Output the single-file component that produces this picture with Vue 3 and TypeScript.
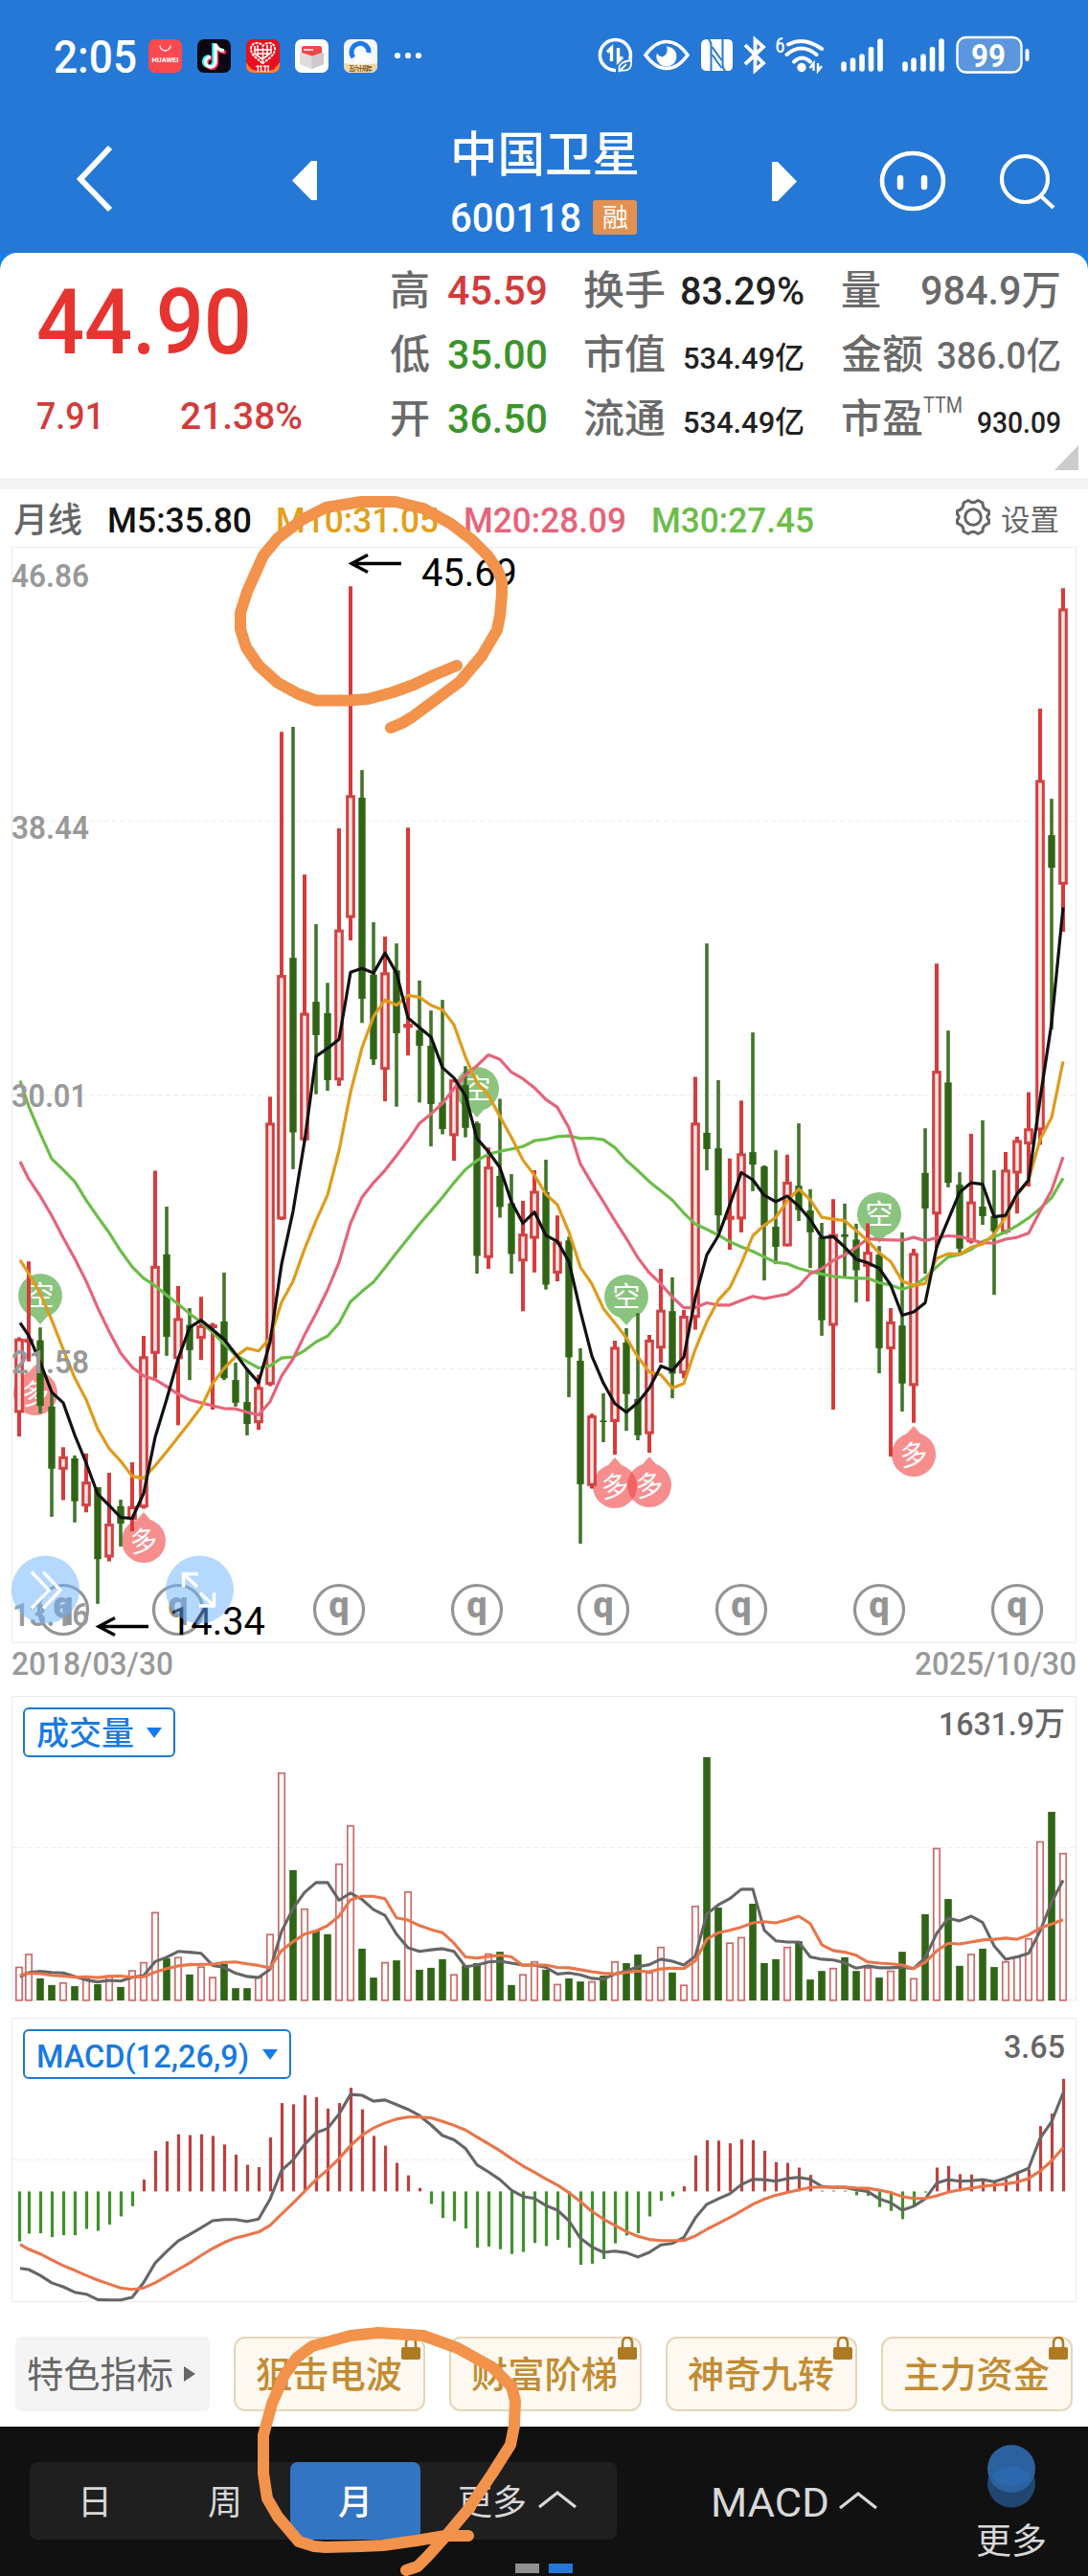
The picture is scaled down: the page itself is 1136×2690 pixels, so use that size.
<script setup lang="ts">
import { h } from 'vue'

interface FitProps { t: string; w: number; s: number; b?: number }

// A single line of text condensed or widened to an exact width; the box bottom is the baseline.
const Fit = (p: FitProps) => {
  const height = Math.round(p.s * 0.72)
  return h('svg', { width: p.w, height, style: 'display:block;overflow:visible;flex:none' }, [
    h('text', {
      x: 0, y: height, textLength: p.w, lengthAdjust: 'spacingAndGlyphs',
      'font-size': p.s, 'font-weight': p.b ?? 400, fill: 'currentColor',
    }, p.t),
  ])
}
Fit.props = ['t', 'w', 's', 'b']

const nums = (s: string) => s.trim().split(/\s+/).map(Number)
const cx = (i: number) => (i === 0 ? 20 : 18 + 12 * i)

// kind, high, body top, body bottom, low
const candles = `R 598 603 796 860;R 398 604 610 662;G 572 606 779 799;G 745 781 945 1072;R 888 914 946 1028;G 910 918 1031 1087;R 905 981 1043 1060;G 994 994 1184 1302;R 956 1092 1178 1190;G 1027 1044 1090 1151;R 928 1046 1078 1110;R 594 650 1046 1051;R 158 411 640 706;G 253 379 597 647;R 463 549 654 830;G 521 565 632 711;R 491 568 600 658;R 560 566 572 789;G 427 556 706 711;G 665 711 771 781;G 682 769 827 857;R 697 731 823 842;R -37 33 722 727;R -1001 -357 285 288;G -1014 -404 57 154;R -624 -257 76 80;G -493 -288 -200 -44;G -338 -258 -81 -53;R -746 -477 -82 -66;R -1385 -832 -511 -450;G -900 -827 -296 -232;G -498 -360 -136 -121;R -460 -364 -110 -25;G -442 -371 -205 -11;R -748 -228 -221 -146;G -344 -213 -172 -22;G -265 -172 -18 94;G -293 -22 48 62;R -81 -81 65 132;G -118 -68 45 70;G 28 33 383 430;R 97 149 387 417;G -32 172 254 282;G 167 244 378 430;R 238 326 396 529;R 157 213 336 427;G 129 215 459 472;R 276 347 428 450;G 332 342 651 756;G 627 660 986 1143;R 800 806 989 998;G 746 818 822 875;R 607 625 820 908;G 574 612 748 845;G 534 761 857 870;R 592 606 852 903;R 417 527 626 665;G 440 529 694 759;R 526 543 692 706;R -90 33 545 578;G -442 58 101 157;G -81 99 276 320;R 126 279 286 367;R -27 114 285 321;G -207 109 142 212;G 144 147 303 448;G 104 306 359 405;R 116 189 356 358;G 33 198 262 291;G 207 263 321 415;G 296 333 553 594;R 233 327 566 789;G 245 326 333 438;G 298 340 421 506;R 297 374 410 503;G 357 380 627 693;R 521 558 628 913;G 321 567 720 794;R 364 377 725 824;G 46 164 258 430;R -389 -104 272 362;G -212 -75 190 202;G 162 195 364 375;R 61 241 345 350;G 25 253 278 301;G 157 278 318 486;R 109 157 320 325;R 68 79 164 271;R -49 48 87 200;R -1062 -872 50 90;G -824 -728 -642 -215;R -1380 -1325 -599 -473`
  .split(';').map((row, i) => {
    const [kind, ...v] = row.trim().split(' ')
    const [hi, top, bot, lo] = v.map(n => 1160 + Number(n) / 2.529)
    return { x: cx(i), up: kind === 'R', hi, top, bot, lo }
  })

const line = (s: string, base: number, k: number) =>
  nums(s).map((v, i) => `${i === 0 ? 21 : cx(i)},${(base + v / k).toFixed(1)}`).join(' ')

const averages = [
  { c: '#6cbd4a', s: '-80 -12 60 127 156 187 236 280 322 370 412 442 462 487 510 536 558 585 615 645 662 679 673 653 650 633 610 595 561 504 477 452 414 375 337 299 264 228 190 155 131 114 107 101 94 79 75 68 66 73 72 76 97 131 158 187 211 236 270 299 313 328 346 359 371 386 400 404 416 424 431 437 440 442 442 454 460 471 462 441 412 386 380 366 345 333 320 303 283 258 230 178' },
  { c: '#e5647a', s: '134 180 225 277 335 390 450 520 583 640 677 700 710 728 748 763 771 779 786 787 796 803 768 700 655 592 535 473 400 297 228 190 157 118 78 33 8 -20 -59 -95 -119 -148 -136 -102 -85 -61 -30 -9 45 140 192 240 290 337 388 428 457 492 520 520 507 513 513 501 490 496 490 484 463 430 417 395 380 361 338 340 341 342 334 343 335 330 332 340 349 349 339 334 323 265 210 122' },
  { c: '#de9c1c', s: '394 430 482 552 630 705 763 840 892 925 965 970 937 900 862 823 783 720 680 649 627 634 600 505 450 365 290 222 105 -49 -167 -249 -293 -279 -305 -300 -279 -267 -227 -142 -74 -42 15 70 130 170 220 248 320 413 457 522 560 600 650 690 697 732 720 630 557 500 467 403 330 302 282 238 206 235 281 286 290 316 343 375 398 450 461 456 390 377 379 360 352 326 280 222 183 75 18 -131' },
  { c: '#111', s: '560 594 664 743 771 856 930 1012 1042 1074 1076 1010 862 762 655 572 553 578 604 642 683 718 610 405 265 80 -144 -165 -189 -366 -376 -364 -417 -364 -245 -220 -195 -114 -87 -40 73 108 150 240 297 267 329 345 398 529 648 719 773 796 770 732 674 686 650 493 380 330 248 163 182 223 240 225 252 287 335 332 360 392 401 416 460 540 531 507 360 288 215 190 194 280 276 219 183 -32 -232 -537' },
].map(a => ({ c: a.c, p: line(a.s, 1160, 2.529) }))

const volumes = nums('695 662 725 742 735 745 724 740 717 747 704 683 555 674 670 715 694 721 688 750 750 720 611 198 448 546 602 612 431 333 649 723 683 679 502 703 698 676 714 692 686 661 657 742 714 681 703 739 725 733 732 718 681 686 664 709 644 710 741 539 159 544 633 619 534 686 676 644 630 728 706 698 671 706 697 723 705 657 724 561 391 522 693 662 649 696 681 668 622 374 299 404')
  .map((v, i) => ({ x: candles[i].x, up: candles[i].up, y: 1770 + v / 2.45 }))
const volumeLines = [
  { c: '#666', s: '721 710 707 710 711 720 729 734 730 732 722 718 682 671 656 658 661 692 697 712 720 723 702 605 546 505 480 480 525 507 523 549 564 612 647 656 652 649 656 695 691 683 681 686 691 691 697 714 711 716 725 727 714 706 695 690 676 681 691 668 560 537 521 497 497 602 629 632 632 670 676 678 685 699 693 698 698 696 700 672 610 571 578 566 582 642 676 670 661 604 530 474' },
  { c: '#e9754a', s: '717 712 713 717 719 722 721 723 720 719 722 721 709 700 693 690 689 689 684 683 688 692 698 654 631 612 604 590 566 524 515 515 521 570 576 590 600 608 635 670 673 669 666 670 692 691 691 697 698 703 708 712 714 710 706 708 701 699 700 680 625 608 602 594 583 580 583 575 566 585 639 654 658 666 683 686 688 691 700 684 655 635 637 632 627 625 622 625 614 596 586 575' },
].map(a => ({ c: a.c, p: line(a.s, 1770, 2.45) }))

const macdBars = nums('1398 1378 1377 1387 1382 1382 1366 1371 1355 1334 1308 1240 1166 1142 1124 1126 1124 1128 1150 1176 1202 1208 1132 1044 1047 1024 1029 1058 1044 1005 1060 1128 1153 1197 1229 1261 1302 1338 1346 1365 1414 1411 1418 1430 1425 1402 1410 1394 1414 1458 1455 1443 1403 1383 1377 1334 1294 1283 1257 1178 1139 1140 1147 1137 1139 1166 1195 1197 1209 1228 1268 1268 1268 1280 1281 1310 1320 1341 1306 1273 1209 1205 1226 1227 1240 1245 1240 1226 1214 1103 1071 982')
  .map((v, i) => ({ x: cx(i) + 0.5, y: 1770 + v / 2.45, up: v < 1270 }))
const macdLines = [
  { c: '#666', s: '1467 1470 1485 1504 1514 1528 1533 1547 1548 1548 1541 1503 1453 1424 1397 1380 1363 1345 1342 1342 1347 1341 1290 1216 1190 1150 1120 1109 1072 1022 1024 1039 1036 1048 1060 1076 1100 1127 1138 1160 1202 1220 1240 1267 1283 1288 1306 1318 1345 1390 1412 1426 1423 1427 1438 1426 1407 1403 1388 1338 1303 1289 1276 1253 1239 1240 1244 1237 1234 1239 1257 1260 1260 1266 1270 1289 1299 1318 1308 1289 1249 1240 1244 1243 1240 1245 1236 1223 1211 1134 1092 1018' },
  { c: '#e9754a', s: '1406 1418 1430 1445 1460 1472 1485 1497 1507 1517 1521 1517 1504 1487 1470 1453 1434 1416 1401 1389 1382 1374 1357 1328 1300 1270 1240 1215 1186 1153 1126 1108 1095 1085 1080 1080 1082 1091 1101 1113 1131 1148 1166 1186 1205 1221 1238 1254 1273 1296 1321 1341 1357 1373 1385 1393 1396 1396 1396 1384 1367 1352 1337 1320 1303 1290 1280 1273 1266 1260 1259 1259 1259 1261 1262 1267 1273 1283 1288 1288 1281 1272 1266 1262 1257 1254 1251 1246 1237 1218 1192 1158' },
].map(a => ({ c: a.c, p: line(a.s, 1770, 2.45) }))

const sells = [[42, 1353], [498, 1137], [654, 1354], [918, 1268]]
const buys = [[37, 1455], [150, 1609], [642, 1552], [678, 1551], [954, 1519]]
const quarters = [66, 186, 354, 498, 630, 774, 918, 1062]
const axis = [
  { t: '46.86', x: 12, y: 613, w: 81 }, { t: '38.44', x: 12, y: 875.5, w: 81 },
  { t: '30.01', x: 12, y: 1155.5, w: 79 }, { t: '21.58', x: 12, y: 1434, w: 81 },
  { t: '13.16', x: 13, y: 1698, w: 80 },
]
const stats = [
  [
    { l: '高', lw: 42, v: '45.59', w: 105, s: 43, c: 'red' },
    { l: '低', lw: 42, v: '35.00', w: 105, s: 43, c: 'green' },
    { l: '开', lw: 42, v: '36.50', w: 105, s: 43, c: 'green' },
  ],
  [
    { l: '换手', lw: 86, v: '83.29%', w: 130, s: 41, c: 'dark' },
    { l: '市值', lw: 86, v: '534.49亿', w: 127, s: 32, c: 'dark' },
    { l: '流通', lw: 86, v: '534.49亿', w: 127, s: 32, c: 'dark' },
  ],
  [
    { l: '量', lw: 42, v: '984.9万', w: 147, s: 42, c: 'grey' },
    { l: '金额', lw: 86, v: '386.0亿', w: 130, s: 39, c: 'grey' },
    { l: '市盈', lw: 86, v: '930.09', w: 88, s: 31, c: 'dark', sup: 'TTM' },
  ],
]
const chips = ['狙击电波', '财富阶梯', '神奇九转', '主力资金']
</script>

<template>
  <div class="app">
    <header>
      <div class="status">
        <Fit class="time" t="2:05" :w="87" :s="48" :b="500" />
        <div class="apps">
          <svg width="35" height="35"><rect width="35" height="35" rx="7" fill="#fb4950" /><path d="M12 6.5a5.5 5.5 0 0 0 11 0" fill="none" stroke="#fff" stroke-width="1.3" /><text x="3.5" y="24" font-size="6.500" font-weight="700" fill="#fff" textLength="28" lengthAdjust="spacingAndGlyphs">HUAWEI</text></svg>
          <svg width="35" height="35"><rect width="35" height="35" rx="7" fill="#0b0814" /><g fill="none" stroke-width="4"><path d="M18 4v19a5.2 5.2 0 1 1-5-5M18 5q2 6 10 7" stroke="#25f4ee" transform="translate(-.8 0)" /><path d="M19.5 5v19a5.2 5.2 0 1 1-5-5M19.500 6q2 6 9.500 7" stroke="#fe2c55" transform="translate(.7 .8)" /><path d="M19 4.500v19a5.200 5.200 0 1 1-5-5M19 5.500q2 6 9 6.500" stroke="#fff" stroke-width="3.500" /></g></svg>
          <svg width="35" height="35"><clipPath id="a3"><rect width="35" height="35" rx="7" /></clipPath><g clip-path="url(#a3)"><rect width="35" height="35" fill="#e8101c" /><path d="M0 24q4 9 17 9t18-9v11H0z" fill="#f98038" /><path d="M5 26h25v5q-12 5-25 0z" fill="#e8101c" /><path d="M17.500 25C9 19 5 15 5 10c0-7 9-8 12.500-3C21 2 30 3 30 10c0 5-4 9-12.500 15z" fill="none" stroke="#fff" stroke-width="2" stroke-dasharray="3 1" /><path d="M9 7v8l8 6 9-7V6M12 6v12M17.500 9v15M22 6v12M8 11h19M12 15h12" fill="none" stroke="#fff" stroke-width="1.600" /><text x="9.500" y="33.500" font-size="9" font-weight="700" fill="#fff" textLength="16">11.11</text></g></svg>
          <svg width="35" height="35"><rect width="35" height="35" rx="7" fill="#fefdfd" /><path d="M5 14h25v12l-12.500 5L5 26z" fill="#e0dcdc" /><path d="M17.500 18 30 14v12l-12.500 5z" fill="#cfcaca" /><path d="M7 9q0-2 3-2h16q2 0 2 2v5l-10 3.500L7 14z" fill="#ee4747" /><path d="M9 11h10" stroke="#fff" stroke-width="1.500" /></svg>
          <svg width="35" height="35"><clipPath id="a5"><rect width="35" height="35" rx="7" /></clipPath><g clip-path="url(#a5)"><rect width="35" height="35" fill="#f6f7fd" /><path d="M0 25q17 3 35 0v10H0z" fill="#ecd7ab" /><path d="M10 19a9 9 0 1 1 16-5" fill="none" stroke="#1b7aea" stroke-width="5" /><path d="M12 23q-1-6 4-6 2-6 7-3 5 1 3 6 3 1 1 3z" fill="#fff" /><text x="5" y="32.500" font-size="6.500" font-weight="700" fill="#8a5b25" textLength="25" font-family="Noto Sans CJK SC">五六十周年</text></g></svg>
        </div>
        <svg class="dots" width="30" height="8" fill="#fff"><circle cx="4" cy="4" r="3.100" /><circle cx="15" cy="4" r="3.100" /><circle cx="26" cy="4" r="3.100" /></svg>
        <svg class="sys" width="456" height="42" viewBox="620 36 456 42" fill="none" stroke="#fff">
          <path d="M643 73.500A16 16 0 1 1 657.800 62" stroke-width="3.600" />
          <path d="M638.500 64V50l-4.500 4.500M645.500 50v14l4.500-4.500" stroke-width="3.400" />
          <path d="M646.500 73.500q-1.500-9 12.500-10.500 1 12-9.500 10.500zM646 75l8-8" stroke-width="1.800" />
          <path d="M674 57.500Q684 43.500 696 43.500T718 57.500Q708 71.500 696 71.500T674 57.500z" stroke-width="3.600" />
          <path d="M696 48.500a10.500 10.500 0 1 1-10 7q4 6 8 2.500t2-9.500z" fill="#fff" stroke="none" />
          <path fill="#fff" stroke="none" d="M738 41h22q5 0 5 6v21q0 6-5 6h-22q-6 0-6-6V47q0-6 6-6z" />
          <path d="M739.500 41q3 2 3 7v26M757.500 74q-3-2-3-7V41" stroke="#2578d5" stroke-width="2" />
          <path d="M743.500 49l10 14M743.500 57l10 14" stroke="#2578d5" stroke-width="2" />
          <path d="m778 47 19 19-8.500 7.500V41.500L797 49l-19 18" stroke-width="3.800" />
          <text x="809.500" y="55" font-size="22" font-weight="500" fill="#fff" stroke="none" textLength="10" lengthAdjust="spacingAndGlyphs">6</text>
          <path d="M823 46.500q16-9 35 4.500M821.500 57q15-13 31 0M829 64.500q8.500-8 17 0" stroke-width="4" stroke-linecap="round" />
          <circle cx="837" cy="70.500" r="4.700" fill="#fff" stroke="none" />
          <path d="M849.500 74V66l-4 5M854 66v8l4-5" stroke-width="2.400" />
          <g stroke-width="5.600" stroke-linecap="round">
            <path d="M881 67v5M890.500 63v9M900 59v13M909.500 51.500v20.500M919 43v29" />
            <path d="M945 67v5M954 63v9M964 59v13M973.500 51.500v20.500M983 43v29" />
          </g>
          <rect x="999.500" y="39" width="67" height="36.500" rx="9" fill="#5b96de" stroke-width="2.400" />
          <path d="M1072.500 53v9" stroke-width="4" stroke-linecap="round" />
          <text x="1014" y="69.500" font-size="34" font-weight="700" fill="#fff" stroke="none" textLength="36" lengthAdjust="spacingAndGlyphs">99</text>
        </svg>
      </div>
      <nav>
        <svg class="back" width="42" height="72"><path d="M36 4 5 37l31 32" fill="none" stroke="#fff" stroke-width="6" /></svg>
        <svg class="prev" width="26" height="42"><path d="M26 0v41h-6L0 20.500 20 0z" fill="#fff" /></svg>
        <div class="title">
          <Fit t="中国卫星" :w="198" :s="50" :b="500" />
          <div class="code"><Fit t="600118" :w="137" :s="43" :b="500" /><span class="badge"><Fit t="融" :w="27" :s="27" /></span></div>
        </div>
        <svg class="next" width="26" height="42"><path d="M0 0v41h6l20-20.500L6 0z" fill="#fff" /></svg>
        <svg class="face" width="70" height="66" fill="none" stroke="#fff"><ellipse cx="35" cy="33" rx="32" ry="29" stroke-width="4.600" /><path d="M22 30v9M47 30v9" stroke-width="6.500" stroke-linecap="round" /></svg>
        <svg class="find" width="60" height="62" fill="none" stroke="#fff" stroke-width="4.200"><circle cx="27" cy="28" r="24" /><path d="m44 46 13 12" /></svg>
      </nav>
    </header>

    <div class="cardback"><section class="quote">
      <div class="price">
        <Fit t="44.90" :w="225" :s="94" :b="500" />
        <div class="chg"><Fit t="7.91" :w="71" :s="39" :b="500" /><Fit class="pct" t="21.38%" :w="128" :s="39" :b="500" /></div>
      </div>
      <div v-for="(col, i) in stats" :key="i" class="col" :class="'col' + i">
        <div v-for="r in col" :key="r.l" class="stat">
          <span class="grey lab"><Fit :t="r.l" :w="r.lw" :s="42" :b="500" /><span v-if="'sup' in r" class="sup"><Fit t="TTM" :w="41" :s="23" :b="400" /></span></span>
          <span :class="r.c"><Fit :t="r.v" :w="r.w" :s="r.s" :b="500" /></span>
        </div>
      </div>
      <svg class="corner" width="25" height="26"><path d="M25 0v26H0z" fill="#ccc" /></svg>
    </section></div>

    <section class="legend">
      <Fit class="kind" t="月线" :w="72" :s="36" :b="500" />
      <Fit class="m5" t="M5:35.80" :w="151" :s="37" :b="500" />
      <Fit class="m10" t="M10:31.05" :w="170" :s="37" :b="500" />
      <Fit class="m20" t="M20:28.09" :w="170" :s="37" :b="500" />
      <Fit class="m30" t="M30:27.45" :w="170" :s="37" :b="500" />
      <svg class="gear" width="38" height="40" viewBox="-19 -20 38 40" fill="none" stroke="#666" stroke-width="3"><path d="M-5-17.500Q0-13 5-17.500L10-15Q9.500-8.500 16.500-6.500V-3Q13 0 16.500 3V6.500Q9.500 8.500 10 15L5 17.500Q0 13-5 17.500L-10 15Q-9.500 8.500-16.500 6.500V3Q-13 0-16.500-3V-6.500Q-9.500-8.500-10-15z" stroke-linejoin="round" /><circle r="8.300" /></svg>
      <Fit class="set" t="设置" :w="61" :s="31" />
    </section>

    <svg class="pane" width="1136" height="1200" viewBox="0 570 1136 1200">
      <rect x="12.500" y="571.500" width="1111" height="1144" fill="none" stroke="#ececec" />
      <path d="M13 857.500H1123M13 1143.500H1123M13 1429.500H1123" stroke="#ececec" stroke-dasharray="5 3" />
      <g font-family="Noto Sans CJK SC" font-size="29" text-anchor="middle" fill="#fff">
        <g v-for="m in sells" :key="m[0]" :transform="`translate(${m[0]} ${m[1]})`">
          <path d="M0 30-7 22A23 23 0 1 1 7 22z" fill="#8bc47f" /><text y="10.500">空</text>
        </g>
        <g v-for="m in buys" :key="m[0]" :transform="`translate(${m[0]} ${m[1]})`">
          <path d="M0-30 7-22A23 23 0 1 1-7-22z" fill="#f04848" fill-opacity=".62" /><text y="10.500" transform="rotate(-8)">多</text>
        </g>
      </g>
      <g v-for="x in quarters" :key="x">
        <circle :cx="x" cy="1681" r="25.500" fill="none" stroke="#949494" stroke-width="3.200" />
        <text :x="x" y="1688.500" font-size="38" font-weight="800" text-anchor="middle" fill="#949494">q</text>
      </g>
      <template v-for="c in candles" :key="c.x">
        <g v-if="c.up" stroke="#d93a3a" fill="none">
          <path :d="`M${c.x} ${c.hi}V${c.top}M${c.x} ${c.bot}V${c.lo}`" stroke-width="4" />
          <rect :x="c.x - 3.300" :y="c.top + 0.800" width="6.600" :height="Math.max(c.bot - c.top - 1.600, 0.500)" stroke-width="3.100" stroke="#d04343" fill="#fbe6e6" />
        </g>
        <g v-else fill="#316516">
          <rect :x="c.x - 1.800" :y="c.hi" width="3.600" :height="c.lo - c.hi" fill="#42752a" />
          <rect :x="c.x - 3.700" :y="c.top" width="7.400" :height="c.bot - c.top" />
        </g>
      </template>
      <polyline v-for="a in averages" :key="a.c" :points="a.p" fill="none" :stroke="a.c" stroke-width="3.200" stroke-linejoin="round" />
      <text v-for="a in axis" :key="a.t" :x="a.x" :y="a.y" :textLength="a.w" lengthAdjust="spacingAndGlyphs" font-size="34" font-weight="600" fill="#999">{{ a.t }}</text>
      <g fill="none" stroke="#000" stroke-width="3.300"><path d="M419 588.500H367M384 579.500l-17 9 17 9M155 1698.500H103M120 1689.500l-17 9 17 9" /></g>
      <text x="440" y="612" font-size="41" textLength="100" lengthAdjust="spacingAndGlyphs">45.69</text>
      <text x="177" y="1707" font-size="41" textLength="100" lengthAdjust="spacingAndGlyphs">14.34</text>
      <g fill="#6cb2ff" fill-opacity=".5"><circle cx="47.500" cy="1660" r="35.500" /><circle cx="208.500" cy="1660" r="35.500" /></g>
      <g fill="none" stroke="#fff" stroke-width="3.400"><path d="m33 1641.500 18 19-18 19M45 1641.500l18 19-18 19" /><path d="M207 1643.500h-15.500v14M192 1644l14 13M208 1677h15.500v-14M223 1676.500l-14-13" /></g>
      <g font-size="32.500" font-weight="500" fill="#999"><text x="12" y="1749" textLength="169" lengthAdjust="spacingAndGlyphs">2018/03/30</text><text x="955" y="1749" textLength="169" lengthAdjust="spacingAndGlyphs">2025/10/30</text></g>
    </svg>

    <section class="sub">
      <svg class="pane" width="1136" height="330" viewBox="0 1770 1136 330">
        <rect x="12.500" y="1771.500" width="1111" height="317" fill="none" stroke="#ececec" />
        <path d="M13 1929.500H1123" stroke="#ececec" stroke-dasharray="5 3" />
        <template v-for="v in volumes" :key="v.x">
          <rect v-if="v.up" :x="v.x - 3.200" :y="v.y + 0.800" width="6.400" :height="2088 - v.y" fill="#fff" stroke="#cc6a6a" stroke-width="1.700" />
          <rect v-else :x="v.x - 3.800" :y="v.y" width="7.600" :height="2089 - v.y" fill="#316516" />
        </template>
        <polyline v-for="a in volumeLines" :key="a.c" :points="a.p" fill="none" :stroke="a.c" stroke-width="3.100" stroke-linejoin="round" />
        <text x="980" y="1812" font-size="34" font-weight="500" textLength="132" lengthAdjust="spacingAndGlyphs" fill="#666">1631.9万</text>
      </svg>
      <div class="pick"><Fit t="成交量" :w="102" :s="34" :b="500" /><svg width="16" height="12"><path d="M0 0h16L8 11z" fill="#127bf2" /></svg></div>
    </section>

    <section class="sub">
      <svg class="pane" width="1136" height="320" viewBox="0 2100 1136 320">
        <rect x="12.500" y="2107.500" width="1111" height="296" fill="none" stroke="#ececec" />
        <path d="M13 2255.500H1123" stroke="#ececec" stroke-dasharray="5 3" />
        <path v-for="b in macdBars" :key="b.x" :d="`M${b.x} 2288.400V${b.y}`" :stroke="b.up ? '#bd4141' : '#3f912b'" stroke-width="3.200" />
        <polyline v-for="a in macdLines" :key="a.c" :points="a.p" fill="none" :stroke="a.c" stroke-width="3.100" stroke-linejoin="round" />
        <text x="1048" y="2149" font-size="34" font-weight="500" textLength="64" lengthAdjust="spacingAndGlyphs" fill="#666">3.65</text>
      </svg>
      <div class="pick macd"><Fit t="MACD(12,26,9)" :w="222" :s="34" :b="500" /><svg width="16" height="12"><path d="M0 0h16L8 11z" fill="#127bf2" /></svg></div>
    </section>

    <section class="chips">
      <div class="feature"><Fit t="特色指标" :w="153" :s="38" /><svg width="12" height="16"><path d="M0 0v16l12-8z" fill="#666" /></svg></div>
      <div v-for="c in chips" :key="c" class="chip">
        <Fit :t="c" :w="153" :s="38" :b="500" />
        <svg class="lock" width="20" height="25"><path d="M5 14V7q0-6 5-6t5 6v7" fill="none" stroke="#b07c26" stroke-width="2.600" /><rect y="11" width="20" height="13" rx="2" fill="#b07a22" /></svg>
      </div>
    </section>

    <footer>
      <div class="seg">
        <span class="tab"><Fit t="日" :w="36" :s="36" /></span>
        <span class="tab"><Fit t="周" :w="36" :s="36" /></span>
        <span class="tab on"><Fit t="月" :w="36" :s="36" :b="500" /></span>
        <span class="tab more"><Fit t="更多" :w="72" :s="36" /><svg width="40" height="20"><path d="M1 18 20 3l19 15" fill="none" stroke="#d8d8d8" stroke-width="3.300" /></svg></span>
      </div>
      <div class="ind"><Fit t="MACD" :w="124" :s="42" :b="400" /><svg width="40" height="20"><path d="M1 18 20 3l19 15" fill="none" stroke="#d8d8d8" stroke-width="3.300" /></svg></div>
      <div class="menu">
        <svg width="50" height="66"><circle cx="25" cy="40.500" r="25" fill="#204671" /><circle cx="25" cy="25" r="25" fill="#2b619f" /><path d="M4.500 33A25 25 0 0 1 45.500 33 25 25 0 0 1 4.500 33z" fill="#2c68ae" /></svg>
        <Fit t="更多" :w="74" :s="37" />
      </div>
      <div class="pages"><i /><i class="cur" /></div>
    </footer>

    <svg class="ink" width="1136" height="2690" fill="none" stroke="#f2924b" stroke-width="12" stroke-linecap="round" stroke-linejoin="round">
      <path d="M477 695 453 705 432 715 410 723 384 730 362 731.500 330 731.500 312 725 290 713 270 695 257 676 251 657V640L258 618 266 600 275 580 290 562 315 543 340 530 377 524H413L442 531 471 547 493 564 509 580 520 596 524 607V621L522 643 519 658 503 685 480 712 453 732 430 749 420 755 408 760" />
      <path d="M489 2648 465 2648 435 2653 400 2658 377 2659 340 2660 328 2659 312 2654 290 2628 279 2609 275 2583V2543L284 2510 297 2480 310 2462 326 2450 366 2439 395 2436 442 2439 478 2452 514 2472 534 2492 538 2507 537 2533 533 2553 514 2583 489 2620 464 2650 446 2670 436 2680 424 2684" />
    </svg>
  </div>
</template>

<style>
body { margin: 0; background: #fff; }
</style>
<style scoped>
.app { position: relative; width: 1136px; height: 2690px; overflow: hidden; background: #fff; font-family: Roboto, "Noto Sans CJK SC", sans-serif; }
.app * { box-sizing: border-box; }
svg { display: block; flex: none; }
header { height: 264px; background: #2578d5; color: #fff; }
.status { display: flex; align-items: flex-start; height: 100px; }
.time { margin: 41px 0 0 56px; }
.apps { display: flex; gap: 16px; margin: 41px 0 0 12px; }
.dots { margin: 54px 0 0 17px; }
.sys { margin: 36px 60px 0 auto; }
nav { display: flex; align-items: flex-start; height: 164px; }
.back { margin: 50px 0 0 79px; }
.prev { margin: 68px 0 0 184px; }
.title { width: 200px; margin: 43px 0 0 139px; }
.code { display: flex; align-items: flex-end; margin-top: 30px; }
.badge { display: flex; align-items: flex-end; justify-content: center; width: 46px; height: 36px; margin: 0 0 -3px 12px; padding-bottom: 8px; border-radius: 3px; background: #e39150; }
.next { margin: 69px 0 0 136px; }
.face { margin: 56px 0 0 86px; }
.find { margin: 59px 0 0 55px; }
.cardback { height: 235px; background: #1281ef; }
.quote { position: relative; display: flex; height: 235px; border-radius: 18px 18px 0 0; background: #fff; }
.price { width: 370px; padding: 37px 0 0 38px; color: #e63431; }
.chg { display: flex; margin-top: 51px; color: #d33b3b; }
.pct { margin-left: 79px; }
.col { display: flex; flex-direction: column; gap: 25px; padding-top: 12px; }
.col0 { width: 165px; margin-left: 37px; }
.col1 { width: 231px; margin-left: 37px; }
.col2 { width: 230px; margin-left: 38px; }
.stat { display: flex; align-items: flex-end; justify-content: space-between; height: 42px; }
.lab { display: flex; align-items: flex-end; }
.sup { margin-bottom: 21px; }
.grey { color: #6a6a6a; }
.red { color: #d33b3b; }
.green { color: #3a9528; }
.dark { color: #222; }
.corner { position: absolute; left: 1101px; top: 201px; }
.legend { display: flex; align-items: flex-end; height: 71px; padding-bottom: 14px; border-top: 12px solid #f4f4f4; color: #666; }
.kind { margin-left: 14px; }
.m5 { margin-left: 26px; color: #111; }
.m10 { margin-left: 25px; color: #e3a019; }
.m20 { margin-left: 26px; color: #e5647a; }
.m30 { margin-left: 26px; color: #6cbd4a; }
.gear { margin: 0 0 -4px 147px; }
.set { margin: 0 0 2px 10px; }
.sub { position: relative; }
.pick { position: absolute; left: 24px; top: 13px; display: flex; align-items: flex-end; justify-content: space-between; width: 159px; height: 52px; padding: 0 12px 11px 12px; border: 2px solid #1f78d2; border-radius: 6px; color: #197ae0; }
.pick > svg:last-child { margin-bottom: 6px; }
.macd { top: 19px; width: 280px; padding-bottom: 10px; }
.macd > svg:last-child { margin-bottom: 7px; }
.chips { display: flex; gap: 25px; height: 114px; padding: 20px 0 0 16px; }
.feature, .chip { position: relative; display: flex; align-items: flex-end; flex: none; height: 78px; padding-bottom: 25px; }
.feature { gap: 11px; width: 203px; padding-left: 12px; border-radius: 6px; background: #f4f4f4; color: #666; }
.feature > svg:last-child { margin-bottom: 6px; }
.chip { width: 200.300px; padding: 0 0 23px 21px; border: 2px solid #e6d5b8; border-radius: 12px; background: #fdf9f0; color: #c28c34; }
.lock { position: absolute; right: 3px; top: -2px; }
footer { position: relative; display: flex; align-items: flex-start; height: 156px; background: #111; color: #d8d8d8; }
.seg { display: flex; width: 613px; height: 81px; margin: 37px 0 0 31px; border-radius: 8px; background: #1f1f1f; }
.tab { display: flex; align-items: flex-end; justify-content: center; width: 136px; height: 81px; padding-bottom: 26px; }
.on { border-radius: 8px; background: #3375c3; color: #fff; }
.more { width: 205px; gap: 12px; padding-right: 3px; }
.more > svg:last-child { margin-bottom: 6px; }
.ind { display: flex; align-items: flex-end; gap: 10px; margin: 64px 0 0 98px; }
.ind > svg:last-child { margin-bottom: 7px; }
.menu { display: flex; flex-direction: column; align-items: center; width: 80px; margin: 19px 0 0 100px; gap: 21px; }
.pages { position: absolute; left: 538px; top: 143px; display: flex; gap: 10px; }
.pages i { width: 25px; height: 10px; background: #909090; }
.pages .cur { background: #2578d5; }
.ink { position: absolute; left: 0; top: 0; pointer-events: none; }
</style>
